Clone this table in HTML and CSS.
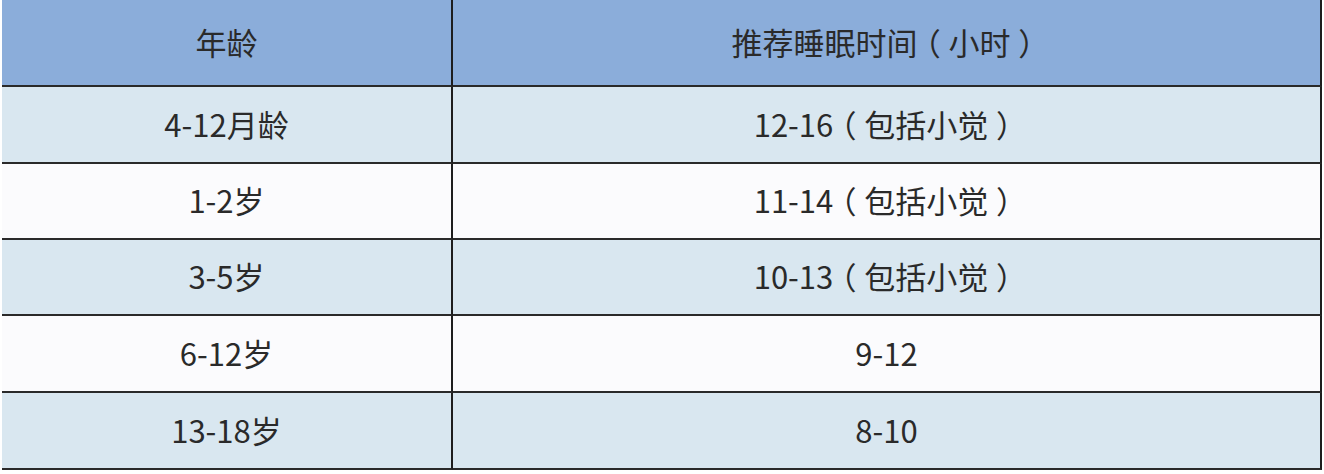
FILE: index.html
```html
<!DOCTYPE html>
<html lang="zh-CN">
<head>
<meta charset="utf-8">
<link rel="stylesheet" href="styles.css">
</head>
<body>
<div class="table">
  <div class="cell head c1">年龄</div>
  <div class="cell head c2">推荐睡眠时间<span class="p">（</span>小时<span class="p">）</span></div>
  <div class="cell blue c1">4-12月龄</div>
  <div class="cell blue c2">12-16<span class="p">（</span>包括小觉<span class="p">）</span></div>
  <div class="cell white c1">1-2岁</div>
  <div class="cell white c2">11-14<span class="p">（</span>包括小觉<span class="p">）</span></div>
  <div class="cell blue c1">3-5岁</div>
  <div class="cell blue c2">10-13<span class="p">（</span>包括小觉<span class="p">）</span></div>
  <div class="cell white c1">6-12岁</div>
  <div class="cell white c2">9-12</div>
  <div class="cell blue c1">13-18岁</div>
  <div class="cell blue c2">8-10</div>
</div>
</body>
</html>
```
FILE: styles.css
```css
html, body {
  margin: 0;
  padding: 0;
  background: #ffffff;
}
.table {
  display: grid;
  grid-template-columns: 451px 869px;
  grid-template-rows: 87px 77px 76px 76px 77px 77px;
  margin-left: 2px;
  width: 1320px;
  font-family: "Noto Sans CJK SC", "Noto Sans", sans-serif;
  font-size: 31px;
  color: #2a2a2a;
}
.cell {
  display: flex;
  align-items: center;
  justify-content: center;
  border-bottom: 2px solid #2a2a2a;
  padding-bottom: 3px;
  white-space: pre;
}
.c1 {
  border-right: 2px solid #1e1e1e;
}
.c2 {
  border-right: 2px solid #1e1e1e;
}
.p {
  font-feature-settings: "halt" 1;
  padding: 0 0.25em;
}
.head {
  background: #8badda;
}
.blue {
  background: #d9e7f0;
}
.white {
  background: #fbfbfd;
}
```
